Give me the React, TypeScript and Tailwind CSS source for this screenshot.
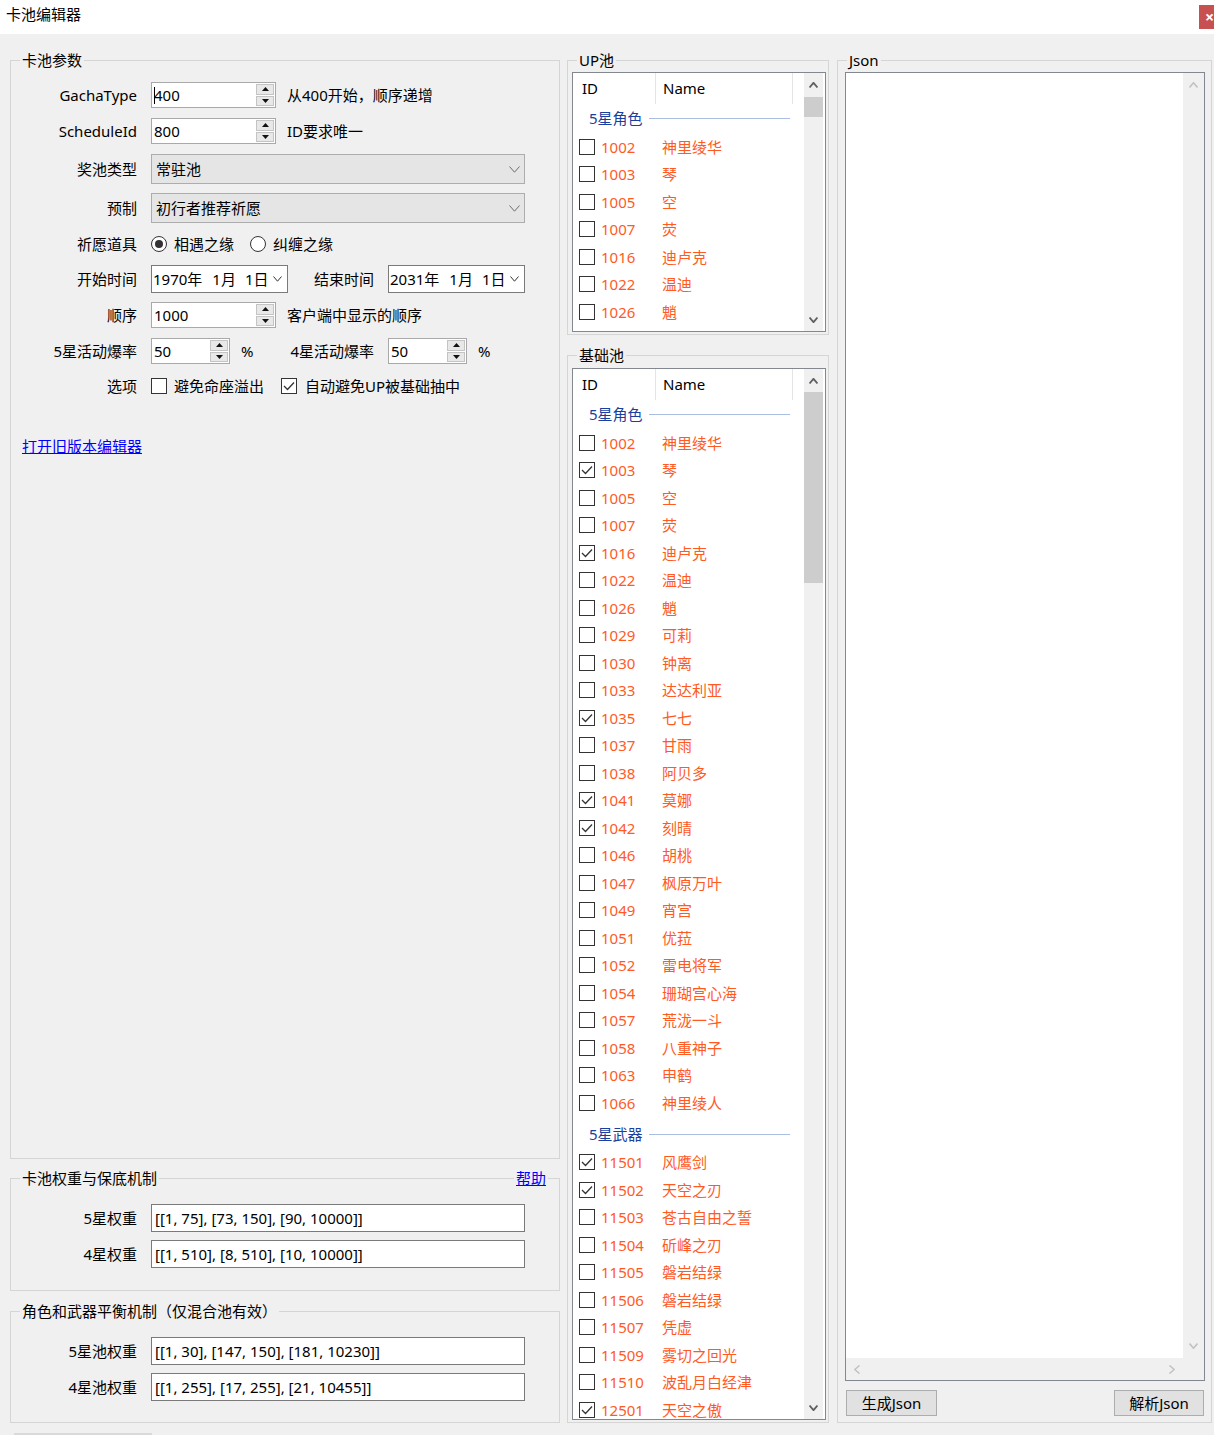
import React from "react";

type Item = { id: string; name: string; checked?: boolean };
type Group = { title: string; items: Item[] };

const upGroups: Group[] = [
  {
    title: "5星角色",
    items: [
      { id: "1002", name: "神里绫华" },
      { id: "1003", name: "琴" },
      { id: "1005", name: "空" },
      { id: "1007", name: "荧" },
      { id: "1016", name: "迪卢克" },
      { id: "1022", name: "温迪" },
      { id: "1026", name: "魈" },
    ],
  },
];

const baseGroups: Group[] = [
  {
    title: "5星角色",
    items: [
      { id: "1002", name: "神里绫华" },
      { id: "1003", name: "琴", checked: true },
      { id: "1005", name: "空" },
      { id: "1007", name: "荧" },
      { id: "1016", name: "迪卢克", checked: true },
      { id: "1022", name: "温迪" },
      { id: "1026", name: "魈" },
      { id: "1029", name: "可莉" },
      { id: "1030", name: "钟离" },
      { id: "1033", name: "达达利亚" },
      { id: "1035", name: "七七", checked: true },
      { id: "1037", name: "甘雨" },
      { id: "1038", name: "阿贝多" },
      { id: "1041", name: "莫娜", checked: true },
      { id: "1042", name: "刻晴", checked: true },
      { id: "1046", name: "胡桃" },
      { id: "1047", name: "枫原万叶" },
      { id: "1049", name: "宵宫" },
      { id: "1051", name: "优菈" },
      { id: "1052", name: "雷电将军" },
      { id: "1054", name: "珊瑚宫心海" },
      { id: "1057", name: "荒泷一斗" },
      { id: "1058", name: "八重神子" },
      { id: "1063", name: "申鹤" },
      { id: "1066", name: "神里绫人" },
    ],
  },
  {
    title: "5星武器",
    items: [
      { id: "11501", name: "风鹰剑", checked: true },
      { id: "11502", name: "天空之刃", checked: true },
      { id: "11503", name: "苍古自由之誓" },
      { id: "11504", name: "斫峰之刃" },
      { id: "11505", name: "磐岩结绿" },
      { id: "11506", name: "磐岩结绿" },
      { id: "11507", name: "凭虚" },
      { id: "11509", name: "雾切之回光" },
      { id: "11510", name: "波乱月白经津" },
      { id: "12501", name: "天空之傲", checked: true },
    ],
  },
];

function GroupBox({
  title,
  right,
  className = "",
  bodyClassName = "",
  children,
}: {
  title: string;
  right?: React.ReactNode;
  className?: string;
  bodyClassName?: string;
  children?: React.ReactNode;
}) {
  return (
    <div className={`flex flex-col ${className}`}>
      <div className="flex h-[20px] shrink-0">
        <div className="h-[10px] w-[10px] self-end border-l border-t border-[#d5d5d5]" />
        <span className="whitespace-nowrap px-[2px] leading-[20px]">{title}</span>
        {right ? (
          <>
            <div className="h-[10px] flex-1 self-end border-t border-[#d5d5d5]" />
            {right}
            <div className="h-[10px] w-[12px] self-end border-r border-t border-[#d5d5d5]" />
          </>
        ) : (
          <div className="h-[10px] flex-1 self-end border-r border-t border-[#d5d5d5]" />
        )}
      </div>
      <div className={`min-h-0 flex-1 border-x border-b border-[#d5d5d5] ${bodyClassName}`}>{children}</div>
    </div>
  );
}

function Tri({ up }: { up?: boolean }) {
  return (
    <svg width="7" height="4" viewBox="0 0 7 4">
      <path d={up ? "M0 4 L3.5 0 L7 4 Z" : "M0 0 L3.5 4 L7 0 Z"} fill="#111" />
    </svg>
  );
}

function Chevron({ dir = "down", color = "#555", w = 1, size = 9 }: { dir?: "up" | "down" | "left" | "right"; color?: string; w?: number; size?: number }) {
  const h = Math.round(size / 2) + 1;
  if (dir === "left" || dir === "right") {
    return (
      <svg width={h} height={size} viewBox={`0 0 ${h} ${size}`}>
        <path
          d={dir === "left" ? `M${h - 0.5} 0.5 L0.8 ${size / 2} L${h - 0.5} ${size - 0.5}` : `M0.5 0.5 L${h - 0.8} ${size / 2} L0.5 ${size - 0.5}`}
          fill="none"
          stroke={color}
          strokeWidth={w}
        />
      </svg>
    );
  }
  return (
    <svg width={size} height={h} viewBox={`0 0 ${size} ${h}`}>
      <path
        d={dir === "up" ? `M0.5 ${h - 0.5} L${size / 2} 0.8 L${size - 0.5} ${h - 0.5}` : `M0.5 0.5 L${size / 2} ${h - 0.8} L${size - 0.5} 0.5`}
        fill="none"
        stroke={color}
        strokeWidth={w}
      />
    </svg>
  );
}

function Spin({ value, className, caret }: { value: string; className: string; caret?: boolean }) {
  return (
    <div className={`flex h-[26px] shrink-0 border border-[#a9a9a9] bg-white ${className}`}>
      <div className="flex flex-1 items-center pl-[2px]">
        {caret && <span className="mr-[-1px] h-[17px] w-px bg-black" />}
        <span>{value}</span>
      </div>
      <div className="flex w-[19px] flex-col gap-[1px] py-[1px] pr-[1px]">
        <div className="flex flex-1 items-center justify-center border border-[#c4c4c4] bg-[#e8e8e8]">
          <Tri up />
        </div>
        <div className="flex flex-1 items-center justify-center border border-[#c4c4c4] bg-[#e8e8e8]">
          <Tri />
        </div>
      </div>
    </div>
  );
}

function Select({ value }: { value: string }) {
  return (
    <div className="flex h-[30px] w-[374px] shrink-0 items-center justify-between border border-[#adadad] bg-[#e5e5e5] pl-[4px] pr-[4px]">
      <span>{value}</span>
      <Chevron color="#6d6d6d" size={11} />
    </div>
  );
}

function DateBox({ y, className }: { y: string; className: string }) {
  return (
    <div className={`flex h-[28px] shrink-0 items-center justify-between border border-[#7a7a7a] bg-white pl-[1px] pr-[5px] ${className}`}>
      <span className="whitespace-nowrap">
        {y}年<span className="ml-[10px]">1月</span>
        <span className="ml-[9px]">1日</span>
      </span>
      <Chevron color="#333" size={9} />
    </div>
  );
}

function CheckBox({ checked }: { checked?: boolean }) {
  return (
    <div className="flex h-[16px] w-[16px] shrink-0 items-center justify-center border border-[#333] bg-white">
      {checked && (
        <svg width="12" height="10" viewBox="0 0 12 10">
          <path d="M1 5 L4.5 8.5 L11 1.5" fill="none" stroke="#333" strokeWidth="1.3" />
        </svg>
      )}
    </div>
  );
}

function Radio({ checked }: { checked?: boolean }) {
  return (
    <div className="flex h-[16px] w-[16px] shrink-0 items-center justify-center rounded-full border border-[#333] bg-white">
      {checked && <div className="h-[8px] w-[8px] rounded-full bg-[#333]" />}
    </div>
  );
}

function Lbl({ children }: { children: React.ReactNode }) {
  return <div className="w-[125px] shrink-0 whitespace-nowrap text-right">{children}</div>;
}

function TextBox({ value }: { value: string }) {
  return (
    <div className="ml-[14px] flex h-[28px] w-[374px] shrink-0 items-center border border-[#7a7a7a] bg-white pl-[3px]">
      {value}
    </div>
  );
}

function ListBox({ groups, heightClass, thumbClass }: { groups: Group[]; heightClass: string; thumbClass: string }) {
  return (
    <div className={`flex overflow-hidden border border-[#828790] bg-white ${heightClass}`}>
      <div className="flex min-w-0 flex-1 flex-col overflow-hidden">
        <div className="flex h-[31px] shrink-0">
          <div className="flex h-full w-[83px] items-center border-r border-[#e5e5e5] pl-[9px]">ID</div>
          <div className="flex h-full w-[137px] items-center border-r border-[#e5e5e5] pl-[7px]">Name</div>
        </div>
        {groups.map((g, gi) => (
          <div key={g.title} className="flex shrink-0 flex-col">
            <div className={`flex h-[29px] shrink-0 items-center pl-[16px] pr-[14px] ${gi > 0 ? "mt-[3px]" : ""}`}>
              <span className="text-[#1b3f9e]">{g.title}</span>
              <div className="ml-[6px] h-px flex-1 bg-[#aabde2]" />
            </div>
            {g.items.map((it) => (
              <div key={g.title + it.id} className="flex h-[27.5px] shrink-0 items-center pl-[6px] text-[#ff5a1f]">
                <CheckBox checked={it.checked} />
                <span className="ml-[6px] w-[61px]">{it.id}</span>
                <span className="whitespace-nowrap">{it.name}</span>
              </div>
            ))}
          </div>
        ))}
      </div>
      <div className="mr-[2px] flex w-[19px] shrink-0 flex-col bg-[#f0f0f0]">
        <div className="flex h-[23px] shrink-0 items-center justify-center">
          <Chevron dir="up" color="#606060" w={1.8} size={9} />
        </div>
        <div className="flex flex-1 flex-col">
          <div className={`w-full bg-[#cdcdcd] ${thumbClass}`} />
        </div>
        <div className="flex h-[23px] shrink-0 items-center justify-center">
          <Chevron dir="down" color="#606060" w={1.8} size={9} />
        </div>
      </div>
    </div>
  );
}

export default function App() {
  return (
    <div className="h-[1435px] w-[1214px] overflow-hidden bg-[#f0f0f0] font-['Noto_Sans','Noto_Sans_CJK_SC',sans-serif] text-[15px] text-black">
      {/* title bar */}
      <div className="flex h-[34px] bg-white">
        <div className="pl-[6px] pt-[4px] leading-[20px]">卡池编辑器</div>
        <div className="ml-auto mt-[5px] h-[24px] w-[15px] overflow-hidden bg-[#c75050] pl-[6px] text-[16px] font-bold leading-[24px] text-white">
          ×
        </div>
      </div>

      <div className="flex pl-[10px] pt-[16px]">
        {/* left column */}
        <div className="flex w-[550px] flex-col">
          <GroupBox title="卡池参数" className="h-[1109px]" bodyClassName="pt-[7px] pl-[1px]">
            <div className="flex h-[36px] items-center">
              <Lbl>GachaType</Lbl>
              <Spin value="400" caret className="ml-[14px] w-[125px]" />
              <span className="ml-[11px]">从400开始，顺序递增</span>
            </div>
            <div className="flex h-[36px] items-center">
              <Lbl>ScheduleId</Lbl>
              <Spin value="800" className="ml-[14px] w-[125px]" />
              <span className="ml-[11px]">ID要求唯一</span>
            </div>
            <div className="flex h-[40px] items-center">
              <Lbl>奖池类型</Lbl>
              <div className="ml-[14px]">
                <Select value="常驻池" />
              </div>
            </div>
            <div className="flex h-[38px] items-center">
              <Lbl>预制</Lbl>
              <div className="ml-[14px]">
                <Select value="初行者推荐祈愿" />
              </div>
            </div>
            <div className="flex h-[34px] items-center">
              <Lbl>祈愿道具</Lbl>
              <div className="ml-[14px] flex items-center">
                <Radio checked />
                <span className="ml-[7px]">相遇之缘</span>
                <div className="ml-[16px]">
                  <Radio />
                </div>
                <span className="ml-[7px]">纠缠之缘</span>
              </div>
            </div>
            <div className="flex h-[36px] items-center">
              <Lbl>开始时间</Lbl>
              <DateBox y="1970" className="ml-[14px] w-[137px]" />
              <div className="w-[86px] shrink-0 text-right">结束时间</div>
              <DateBox y="2031" className="ml-[14px] w-[137px]" />
            </div>
            <div className="flex h-[36px] items-center">
              <Lbl>顺序</Lbl>
              <Spin value="1000" className="ml-[14px] w-[125px]" />
              <span className="ml-[11px]">客户端中显示的顺序</span>
            </div>
            <div className="flex h-[36px] items-center">
              <Lbl>5星活动爆率</Lbl>
              <Spin value="50" className="ml-[14px] w-[79px]" />
              <span className="ml-[11px] w-[20px]">%</span>
              <div className="w-[113px] shrink-0 whitespace-nowrap text-right">4星活动爆率</div>
              <Spin value="50" className="ml-[14px] w-[79px]" />
              <span className="ml-[11px]">%</span>
            </div>
            <div className="flex h-[34px] items-center">
              <Lbl>选项</Lbl>
              <div className="ml-[14px] flex items-center">
                <CheckBox />
                <span className="ml-[7px]">避免命座溢出</span>
                <div className="ml-[17px]">
                  <CheckBox checked />
                </div>
                <span className="ml-[8px]">自动避免UP被基础抽中</span>
              </div>
            </div>
            <div className="ml-[10px] mt-[33px] h-[20px] leading-[20px] text-[#0000ff] underline">打开旧版本编辑器</div>
          </GroupBox>

          <GroupBox
            title="卡池权重与保底机制"
            right={<span className="px-[2px] leading-[20px] text-[#0000ff] underline">帮助</span>}
            className="mt-[9px] h-[123px]"
            bodyClassName="flex flex-col gap-[8px] pt-[16px] pl-[1px]"
          >
            <div className="flex h-[28px] items-center">
              <Lbl>5星权重</Lbl>
              <TextBox value="[[1, 75], [73, 150], [90, 10000]]" />
            </div>
            <div className="flex h-[28px] items-center">
              <Lbl>4星权重</Lbl>
              <TextBox value="[[1, 510], [8, 510], [10, 10000]]" />
            </div>
          </GroupBox>

          <GroupBox
            title="角色和武器平衡机制（仅混合池有效）"
            className="mt-[10px] h-[122px]"
            bodyClassName="flex flex-col gap-[8px] pt-[16px] pl-[1px]"
          >
            <div className="flex h-[28px] items-center">
              <Lbl>5星池权重</Lbl>
              <TextBox value="[[1, 30], [147, 150], [181, 10230]]" />
            </div>
            <div className="flex h-[28px] items-center">
              <Lbl>4星池权重</Lbl>
              <TextBox value="[[1, 255], [17, 255], [21, 10455]]" />
            </div>
          </GroupBox>
        </div>

        {/* middle column */}
        <div className="ml-[7px] flex w-[262px] flex-col">
          <GroupBox title="UP池" className="h-[285px]" bodyClassName="pt-[2px] pl-[4px] pr-[2px]">
            <ListBox groups={upGroups} heightClass="h-[260px]" thumbClass="mt-[1px] h-[20px]" />
          </GroupBox>
          <GroupBox title="基础池" className="mt-[10px] h-[1078px]" bodyClassName="pt-[3px] pl-[4px] pr-[2px]">
            <ListBox groups={baseGroups} heightClass="h-[1052px]" thumbClass="h-[191px]" />
          </GroupBox>
        </div>

        {/* right column */}
        <div className="ml-[8px] flex w-[375px] flex-col">
          <GroupBox title="Json" className="h-[1373px]" bodyClassName="pt-[2px] pl-[7px] pr-[6px]">
            <div className="flex h-[1309px] flex-col border border-[#828790] bg-white">
              <div className="flex min-h-0 flex-1">
                <div className="flex-1" />
                <div className="flex w-[21px] flex-col justify-between bg-[#f0f0f0]">
                  <div className="flex h-[24px] items-center justify-center">
                    <Chevron dir="up" color="#c2c2c2" w={1.6} size={9} />
                  </div>
                  <div className="flex h-[24px] items-center justify-center">
                    <Chevron dir="down" color="#c2c2c2" w={1.6} size={9} />
                  </div>
                </div>
              </div>
              <div className="flex h-[22px] shrink-0 items-center bg-[#f0f0f0]">
                <div className="flex flex-1 items-center justify-between px-[8px]">
                  <Chevron dir="left" color="#c2c2c2" w={1.6} size={9} />
                  <Chevron dir="right" color="#c2c2c2" w={1.6} size={9} />
                </div>
                <div className="w-[21px]" />
              </div>
            </div>
            <div className="mt-[9px] flex justify-between pl-[1px] pr-[1px]">
              <div className="flex h-[26px] w-[91px] items-center justify-center border border-[#adadad] bg-[#e1e1e1]">生成Json</div>
              <div className="flex h-[26px] w-[90px] items-center justify-center border border-[#adadad] bg-[#e1e1e1]">解析Json</div>
            </div>
          </GroupBox>
        </div>
      </div>

      <div className="ml-[14px] mt-[10px] h-[2px] w-[138px] bg-[#dadada]" />
    </div>
  );
}
